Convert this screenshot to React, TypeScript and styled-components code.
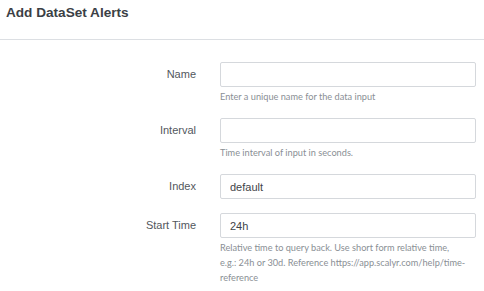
import { Fragment } from "react";
import styled, { createGlobalStyle } from "styled-components";

const GlobalStyle = createGlobalStyle`
  body {
    margin: 0;
    background: #fff;
    font-family: "Liberation Sans", Arial, sans-serif;
  }
`;

const Page = styled.div`
  width: 484px;
  height: 291px;
  overflow: hidden;
  background: #fff;
`;

const Header = styled.div`
  height: 40px;
  border-bottom: 1px solid #dcdfe3;
  padding: 5px 6px 0;
  box-sizing: border-box;
`;

const Title = styled.h2`
  margin: 0;
  font-size: 13.6px;
  font-weight: 700;
  line-height: 15px;
  color: #3b4045;
`;

const Form = styled.div`
  display: grid;
  grid-template-columns: 196px 256px;
  column-gap: 24px;
  row-gap: 14px;
  padding-top: 22px;
`;

const Label = styled.label`
  text-align: right;
  font-size: 11px;
  line-height: 25px;
  color: #52575d;
`;

const Field = styled.div`
  display: flex;
  flex-direction: column;
`;

const Input = styled.input`
  box-sizing: border-box;
  height: 25px;
  width: 256px;
  border: 1px solid #d5d8dc;
  border-radius: 2px;
  padding: 0 9px;
  font-family: inherit;
  font-size: 11px;
  color: #3f4449;
  outline: none;
`;

const Help = styled.div`
  margin-top: 2px;
  font-family: Lato, "Liberation Sans", sans-serif;
  font-size: 9.2px;
  line-height: 15px;
  color: #8a8f95;
  white-space: nowrap;
`;

const HelpLine = styled.div``;

const fields = [
  { label: "Name", value: "", help: ["Enter a unique name for the data input"] },
  { label: "Interval", value: "", help: ["Time interval of input in seconds."] },
  { label: "Index", value: "default", help: [] },
  {
    label: "Start Time",
    value: "24h",
    help: [
      "Relative time to query back. Use short form relative time,",
      "e.g.: 24h or 30d. Reference https://app.scalyr.com/help/time-",
      "reference",
    ],
  },
];

export default function App() {
  return (
    <Page>
      <GlobalStyle />
      <Header>
        <Title>Add DataSet Alerts</Title>
      </Header>
      <Form>
        {fields.map(f => (
          <Fragment key={f.label}>
            <Label>{f.label}</Label>
            <Field>
              <Input defaultValue={f.value} />
              {f.help.length > 0 && (
                <Help>
                  {f.help.map(line => <HelpLine key={line}>{line}</HelpLine>)}
                </Help>
              )}
            </Field>
          </Fragment>
        ))}
      </Form>
    </Page>
  );
}
